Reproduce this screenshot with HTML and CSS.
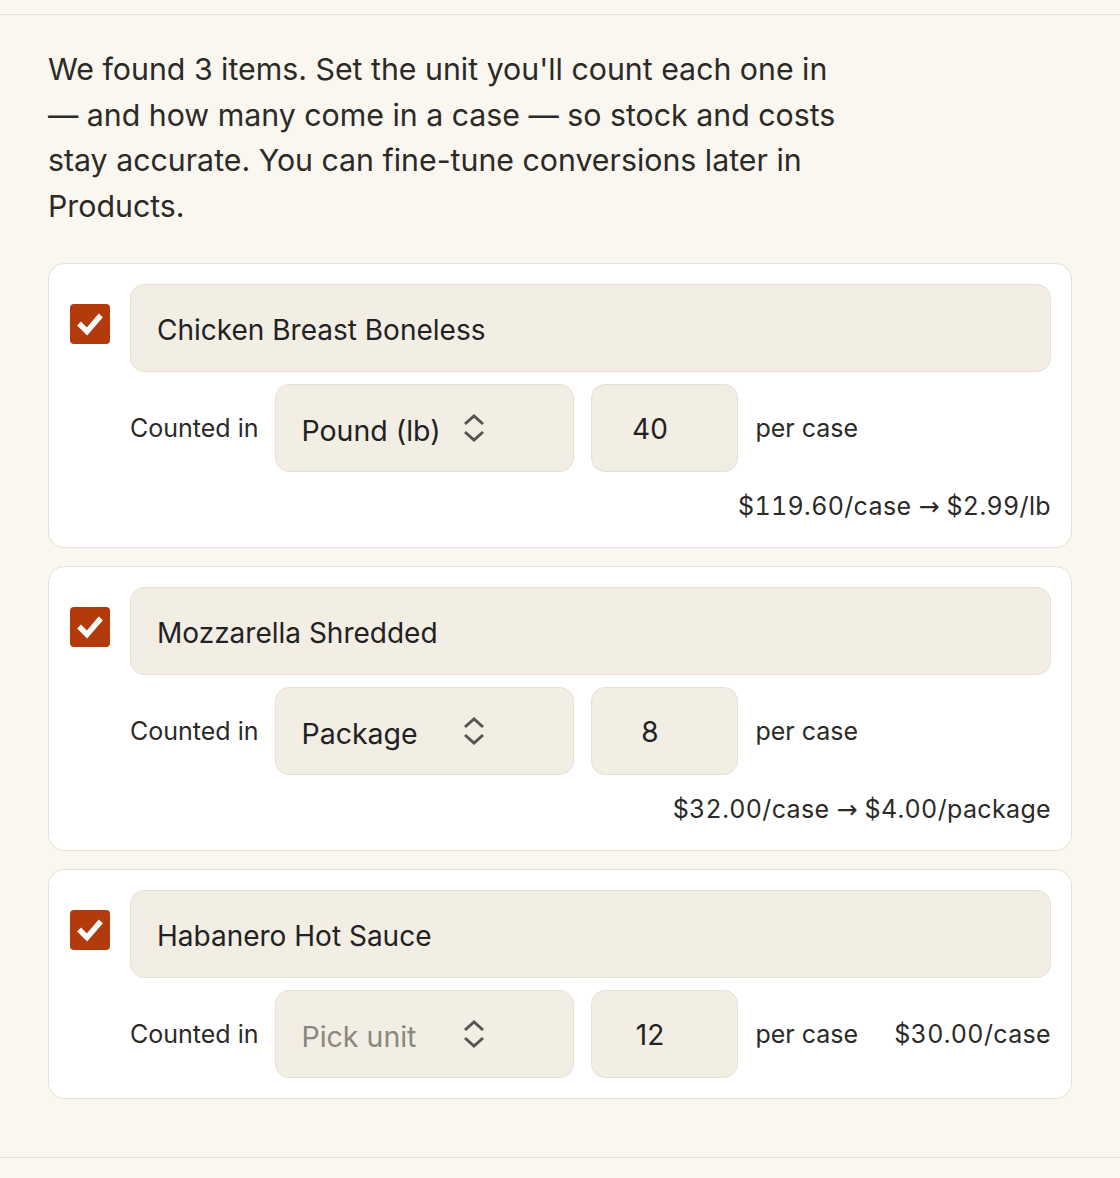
FILE: index.html
```html
<!DOCTYPE html>
<html lang="en">
<head>
<meta charset="utf-8">
<title>Review items</title>
<link rel="stylesheet" href="styles.css">
</head>
<body>
<div class="topbar"></div>
<main class="panel">
  <p class="intro">We found 3 items. Set the unit you'll count each one in — and how many come in a case — so stock and costs stay accurate. You can fine-tune conversions later in Products.</p>
  <div class="list">
    <div class="card">
      <span class="check"><svg viewBox="0 0 40 40" width="40" height="40"><path d="M11 21.5l6 6 12-14" fill="none" stroke="#fff" stroke-width="5.5" stroke-linecap="square"/></svg></span>
      <div class="fields">
        <div class="name">Chicken Breast Boneless</div>
        <div class="row">
          <span class="label">Counted in</span>
          <div class="select"><span>Pound (lb)</span><svg class="chev" viewBox="0 0 24 28" width="24" height="28"><path d="M3 10l9-8 9 8M3 18l9 8 9-8" fill="none" stroke="#555" stroke-width="3"/></svg></div>
          <div class="qty">40</div>
          <span class="label">per case</span>
          <span class="price">$119.60/case <span class="arrow">→</span> $2.99/lb</span>
        </div>
      </div>
    </div>
    <div class="card">
      <span class="check"><svg viewBox="0 0 40 40" width="40" height="40"><path d="M11 21.5l6 6 12-14" fill="none" stroke="#fff" stroke-width="5.5" stroke-linecap="square"/></svg></span>
      <div class="fields">
        <div class="name">Mozzarella Shredded</div>
        <div class="row">
          <span class="label">Counted in</span>
          <div class="select"><span>Package</span><svg class="chev" viewBox="0 0 24 28" width="24" height="28"><path d="M3 10l9-8 9 8M3 18l9 8 9-8" fill="none" stroke="#555" stroke-width="3"/></svg></div>
          <div class="qty">8</div>
          <span class="label">per case</span>
          <span class="price">$32.00/case <span class="arrow">→</span> $4.00/package</span>
        </div>
      </div>
    </div>
    <div class="card">
      <span class="check"><svg viewBox="0 0 40 40" width="40" height="40"><path d="M11 21.5l6 6 12-14" fill="none" stroke="#fff" stroke-width="5.5" stroke-linecap="square"/></svg></span>
      <div class="fields">
        <div class="name">Habanero Hot Sauce</div>
        <div class="row">
          <span class="label">Counted in</span>
          <div class="select"><span class="placeholder">Pick unit</span><svg class="chev" viewBox="0 0 24 28" width="24" height="28"><path d="M3 10l9-8 9 8M3 18l9 8 9-8" fill="none" stroke="#555" stroke-width="3"/></svg></div>
          <div class="qty">12</div>
          <span class="label">per case</span>
          <span class="price">$30.00/case</span>
        </div>
      </div>
    </div>
  </div>
</main>
</body>
</html>
```

FILE: styles.css
```css
* { box-sizing: border-box; }
html, body { margin: 0; padding: 0; }
body {
  background: #faf7f0;
  font-family: Inter, "Noto Sans", "Liberation Sans", sans-serif;
  color: #2b2a27;
}
.topbar { height: 14px; }
.panel {
  border-top: 1px solid #e7e2d7;
  border-bottom: 1px solid #e7e2d7;
  padding: 32px 48px 58px;
}
.intro {
  margin: 0 0 34px;
  max-width: 800px;
  font-size: 30.3px;
  line-height: 45.5px;
}
.list { display: flex; flex-direction: column; gap: 18px; }
.card {
  background: #fff;
  border: 1px solid #e7e2d7;
  border-radius: 16px;
  padding: 20px 20px 20px 21px;
  display: flex;
  align-items: flex-start;
  gap: 20px;
}
.check {
  flex: none;
  width: 40px;
  height: 40px;
  margin-top: 20px;
  background: #b23a0b;
  border-radius: 4px;
  display: block;
}
.check svg { display: block; }
.fields { flex: 1; display: flex; flex-direction: column; gap: 12px; }
.name {
  height: 88px;
  background: #f2eee4;
  border: 1px solid #e7e1d5;
  border-radius: 14px;
  padding: 3px 0 0 26px;
  display: flex;
  align-items: center;
  font-size: 28px;
  color: #222;
}
.row {
  display: flex;
  flex-wrap: wrap;
  align-items: center;
  column-gap: 17px;
  row-gap: 14px;
}
.label { font-size: 25px; color: #2b2a27; }
.select {
  position: relative;
  width: 299px;
  height: 88px;
  background: #f2eee4;
  border: 1px solid #e7e1d5;
  border-radius: 14px;
  padding-left: 25px;
  display: flex;
  align-items: center;
  font-size: 28.5px;
  color: #222;
}
.select span { padding-top: 4px; }
.placeholder { color: #8b877e; }
.chev { position: absolute; left: 186px; top: 29px; }
.qty {
  width: 147px;
  height: 88px;
  background: #f2eee4;
  border: 1px solid #e7e1d5;
  border-radius: 14px;
  display: flex;
  align-items: center;
  justify-content: center;
  padding: 2px 30px 0 0;
  font-size: 28px;
  color: #222;
}
.price {
  margin-left: auto;
  font-size: 25px;
  letter-spacing: 0.35px;
  line-height: 40px;
  font-variant-numeric: tabular-nums;
  color: #2b2a27;
}
.arrow { font-family: Roboto, "Noto Sans", "DejaVu Sans", sans-serif; letter-spacing: 0; }
```
